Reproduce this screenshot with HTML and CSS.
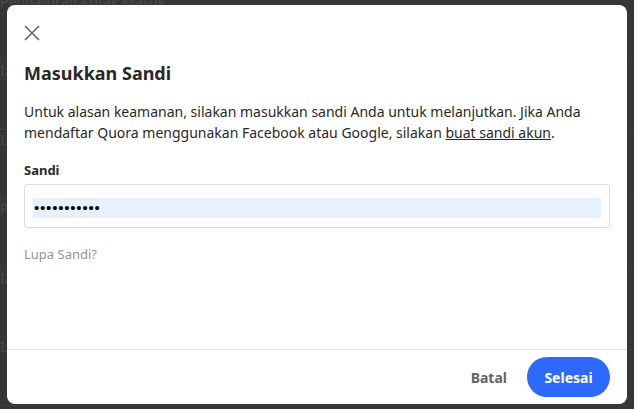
FILE: index.html
```html
<!DOCTYPE html>
<html lang="id">
<head>
  <meta charset="UTF-8">
  <title>Masukkan Sandi</title>
  <link rel="stylesheet" href="styles.css">
</head>
<body>

<!-- dimmed page behind the modal -->
<div class="page">
  <div class="page-row first">Pengaturan Kotak Masuk</div>
  <div class="page-row">Izinkan pesan dari siapa saja di Quora</div>
  <div class="page-row">Izinkan pengguna mengirim pesan Anda</div>
  <div class="page-row">Pengaturan Lainnya</div>
  <div class="page-row">Izinkan pengikut di Quora untuk mempromosikan jawaban Anda</div>
  <div class="page-row">Izinkan pengikut di Quora untuk mempromosikan jawaban Anda</div>
</div>

<div class="modal">
  <div class="modal-body">
    <button class="close-btn" aria-label="Tutup">
      <svg width="16" height="16" viewBox="0 0 16 16">
        <path d="M1 1L15 15M15 1L1 15" stroke="#666" stroke-width="1.6" fill="none"/>
      </svg>
    </button>

    <h2 class="modal-title">Masukkan Sandi</h2>

    <p class="modal-text">Untuk alasan keamanan, silakan masukkan sandi Anda untuk melanjutkan. Jika Anda mendaftar Quora menggunakan Facebook atau Google, silakan <a href="#">buat sandi akun</a>.</p>

    <div class="form-group">
      <label for="password">Sandi</label>
      <div class="input-box">
        <input type="password" id="password" value="12345678901">
      </div>
    </div>

    <a class="forgot" href="#">Lupa Sandi?</a>
  </div>

  <div class="modal-footer">
    <button class="btn-cancel">Batal</button>
    <button class="btn-done">Selesai</button>
  </div>
</div>

</body>
</html>
```

FILE: styles.css
```css
body {
  margin: 0;
  font-family: 'Noto Sans', 'Open Sans', sans-serif;
  background-color: #363636;
  height: 409px;
  overflow: hidden;
}

.page {
  margin-top: -8px;
}

.page-row {
  color: #4a4a4a;
  font-size: 14px;
  height: 68px;
  line-height: 20px;
  border-bottom: 1px solid #3c3c3c;
}

.modal {
  position: absolute;
  top: 5px;
  left: 7px;
  width: 620px;
  height: 399px;
  background-color: #fff;
  border-radius: 8px;
  display: flex;
  flex-direction: column;
  box-sizing: border-box;
}

.modal-body {
  flex: 1;
  padding: 16px 17px 0 17px;
}

.close-btn {
  background: none;
  border: none;
  padding: 0;
  margin: 4px 0 0 0;
  width: 16px;
  height: 16px;
  display: block;
  cursor: pointer;
}

.modal-title {
  font-size: 18px;
  font-weight: bold;
  color: #282829;
  margin: 19px 0 0 0;
  line-height: 26px;
}

.modal-text {
  font-size: 14px;
  line-height: 21px;
  color: #282829;
  margin: 15px 0 0 0;
}

.modal-text a {
  color: #282829;
  text-decoration: underline;
}

.form-group {
  margin-top: 18px;
}

label {
  display: block;
  font-size: 13px;
  font-weight: bold;
  color: #282829;
  line-height: 18px;
  margin-bottom: 5px;
}

.input-box {
  border: 1px solid #dedede;
  border-radius: 3px;
  height: 44px;
  padding: 11px 8px;
  box-sizing: border-box;
}

.input-box input {
  width: 100%;
  height: 20px;
  border: none;
  outline: none;
  padding: 0 1px;
  box-sizing: border-box;
  background-color: #e8f0fe;
  font-size: 15px;
  letter-spacing: 0.8px;
  color: #000;
}

.forgot {
  display: block;
  margin-top: 17px;
  font-size: 13px;
  color: #939598;
  text-decoration: none;
}

.modal-footer {
  border-top: 1px solid #dedede;
  height: 54px;
  display: flex;
  justify-content: flex-end;
  align-items: center;
  padding: 0 17px 0 0;
  gap: 20px;
}

.btn-cancel {
  background: none;
  border: none;
  font-family: inherit;
  font-size: 14px;
  font-weight: bold;
  color: #636466;
  cursor: pointer;
  padding: 0;
}

.btn-done {
  background-color: #2e69ff;
  color: #fff;
  border: none;
  border-radius: 20px;
  width: 83px;
  height: 40px;
  font-family: inherit;
  font-size: 14px;
  font-weight: bold;
  cursor: pointer;
}
```
